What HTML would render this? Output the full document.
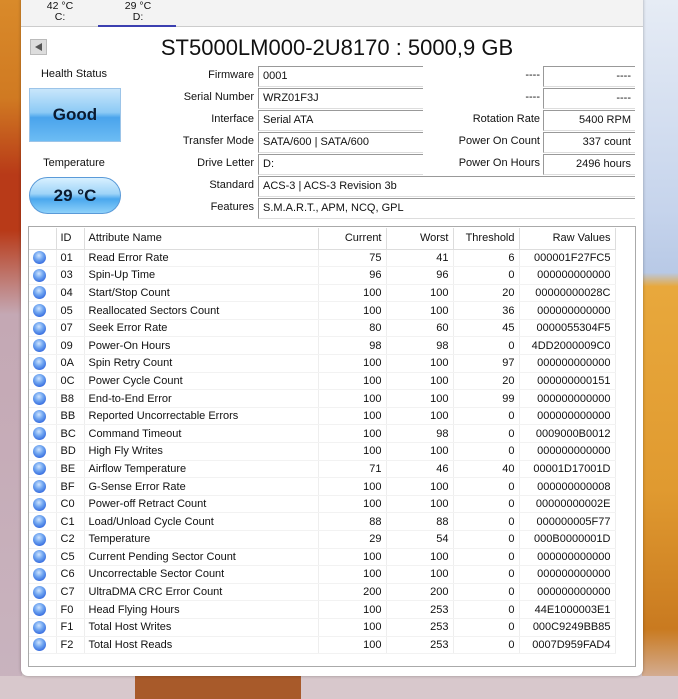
<!DOCTYPE html>
<html><head><meta charset="utf-8"><style>
*{margin:0;padding:0;box-sizing:border-box}
body{width:678px;height:699px;overflow:hidden;position:relative;font-family:"Liberation Sans","DejaVu Sans",sans-serif;font-size:11px;color:#111;
background:linear-gradient(180deg,#c9d6e8 0,#c9d6e8 40%,#d6c6c8 100%)}
.bgl{position:absolute;left:0;top:0;width:22px;height:699px;background:linear-gradient(180deg,#d98a2a 0,#d07a22 14%,#b83a18 25%,#b83a18 33%,#c4a8b4 45%,#c9b4bf 100%)}
.bgr{position:absolute;left:642px;top:0;width:36px;height:699px;background:linear-gradient(180deg,#e6ecf5 0,#c6d4ec 30%,#b8c9e6 39%,#e8a83c 41%,#e09a30 70%,#c97a20 90%,#d8c4c8 100%)}
.bgb{position:absolute;left:0;top:676px;width:678px;height:23px;background:#d8c8cc}
.strip{position:absolute;left:135px;top:676px;width:166px;height:23px;background:#a85a2a}
.win{position:absolute;left:21px;top:-2px;width:622px;height:678px;background:#fff;border-radius:0 0 7px 7px;box-shadow:0 0 3px rgba(0,0,0,.3)}
.tabs{position:absolute;left:0;top:0;width:622px;height:29px;background:#f3f3f3;border-bottom:1px solid #ccc}
.tab{position:absolute;top:3px;width:78px;text-align:center;font-size:10.5px;line-height:11px}
.ab{position:absolute}
.lbl{position:absolute;text-align:right;font-size:11px}
.box{position:absolute;height:21px;border-top:1px solid #999;border-left:1px solid #999;border-bottom:1px solid #ddd;padding:3px 4px;font-size:11px;white-space:nowrap}
.r{text-align:right}
table{border-collapse:collapse;position:absolute;left:8px;top:229px;font-size:11px}
td{height:17.6px;padding:0 4px;border-right:1px solid #eee;border-bottom:1px solid #f2f2f2;white-space:nowrap}
th{height:21px;font-weight:normal;padding:0 4px;border-right:1px solid #ddd;border-bottom:1px solid #ddd;text-align:left}
.dot{display:inline-block;width:13px;height:13px;border-radius:50%;background:radial-gradient(circle at 45% 35%,#cfe4ff 0,#6ea4f0 40%,#3a6fe0 75%,#7a72d0 100%);vertical-align:middle}
</style></head><body>
<div class="bgl"></div><div class="bgr"></div><div class="bgb"></div><div class="strip"></div>
<div class="win">
 <div class="tabs">
  <div class="tab" style="left:0">42 °C<br>C:</div>
  <div class="tab" style="left:78px">29 °C<br>D:</div>
  <div class="ab" style="left:77px;top:27px;width:78px;height:2px;background:#3b3fb0"></div>
 </div>
 <div class="ab" style="left:9px;top:41px;width:17px;height:16px;background:#ddd;border:1px solid #bbb"><div style="position:absolute;left:4px;top:3px;width:0;height:0;border-top:4px solid transparent;border-bottom:4px solid transparent;border-right:7px solid #555"></div></div>
 <div class="ab" style="left:0;width:622px;top:37px;text-align:center;font-size:22px;padding-left:10px">ST5000LM000-2U8170 : 5000,9 GB</div>
 <div class="ab" style="left:7px;top:70px;width:92px;text-align:center;font-size:11px">Health Status</div>
 <div class="ab" style="left:8px;top:90px;width:92px;height:54px;border:1px solid #9cc4e8;background:linear-gradient(180deg,#c8e6fb 0,#8ccaf5 45%,#4aa4ec 55%,#6cbcf4 100%);text-align:center;line-height:52px;font-weight:bold;font-size:17px;color:#0a1a30">Good</div>
 <div class="ab" style="left:7px;top:159px;width:92px;text-align:center;font-size:11px">Temperature</div>
 <div class="ab" style="left:8px;top:179px;width:92px;height:37px;border-radius:19px;border:1px solid #5a9ad8;background:linear-gradient(180deg,#d8f0ff 0,#9ed4f8 45%,#4aa8ee 60%,#8ed2fa 100%);text-align:center;line-height:36px;font-weight:bold;font-size:17px;color:#0a1a30">29 °C</div>

 <div class="lbl" style="left:120px;width:113px;top:71px">Firmware</div>
 <div class="lbl" style="left:120px;width:113px;top:93px">Serial Number</div>
 <div class="lbl" style="left:120px;width:113px;top:115px">Interface</div>
 <div class="lbl" style="left:120px;width:113px;top:137px">Transfer Mode</div>
 <div class="lbl" style="left:120px;width:113px;top:159px">Drive Letter</div>
 <div class="lbl" style="left:120px;width:113px;top:181px">Standard</div>
 <div class="lbl" style="left:120px;width:113px;top:203px">Features</div>
 <div class="box" style="left:237px;width:165px;top:68px">0001</div>
 <div class="box" style="left:237px;width:165px;top:90px">WRZ01F3J</div>
 <div class="box" style="left:237px;width:165px;top:112px">Serial ATA</div>
 <div class="box" style="left:237px;width:165px;top:134px">SATA/600 | SATA/600</div>
 <div class="box" style="left:237px;width:165px;top:156px">D:</div>
 <div class="box" style="left:237px;width:377px;top:178px">ACS-3 | ACS-3 Revision 3b</div>
 <div class="box" style="left:237px;width:377px;top:200px">S.M.A.R.T., APM, NCQ, GPL</div>

 <div class="lbl" style="left:400px;width:119px;top:71px">----</div>
 <div class="lbl" style="left:400px;width:119px;top:93px">----</div>
 <div class="lbl" style="left:400px;width:119px;top:115px">Rotation Rate</div>
 <div class="lbl" style="left:400px;width:119px;top:137px">Power On Count</div>
 <div class="lbl" style="left:400px;width:119px;top:159px">Power On Hours</div>
 <div class="box r" style="left:522px;width:92px;top:68px">----</div>
 <div class="box r" style="left:522px;width:92px;top:90px">----</div>
 <div class="box r" style="left:522px;width:92px;top:112px">5400 RPM</div>
 <div class="box r" style="left:522px;width:92px;top:134px">337 count</div>
 <div class="box r" style="left:522px;width:92px;top:156px">2496 hours</div>

 <div class="ab" style="left:7px;top:228px;width:608px;height:441px;border:1px solid #aaa"></div>
 <table style="top:230px">
 <tr><th style="width:27px"></th><th style="width:28px">ID</th><th style="width:234px">Attribute Name</th><th style="width:68px;text-align:right">Current</th><th style="width:67px;text-align:right">Worst</th><th style="width:66px;text-align:right">Threshold</th><th style="width:96px;text-align:right">Raw Values</th></tr>
 <tr><td><span class="dot"></span></td><td>01</td><td>Read Error Rate</td><td class="r">75</td><td class="r">41</td><td class="r">6</td><td class="r">000001F27FC5</td></tr>
 <tr><td><span class="dot"></span></td><td>03</td><td>Spin-Up Time</td><td class="r">96</td><td class="r">96</td><td class="r">0</td><td class="r">000000000000</td></tr>
 <tr><td><span class="dot"></span></td><td>04</td><td>Start/Stop Count</td><td class="r">100</td><td class="r">100</td><td class="r">20</td><td class="r">00000000028C</td></tr>
 <tr><td><span class="dot"></span></td><td>05</td><td>Reallocated Sectors Count</td><td class="r">100</td><td class="r">100</td><td class="r">36</td><td class="r">000000000000</td></tr>
 <tr><td><span class="dot"></span></td><td>07</td><td>Seek Error Rate</td><td class="r">80</td><td class="r">60</td><td class="r">45</td><td class="r">0000055304F5</td></tr>
 <tr><td><span class="dot"></span></td><td>09</td><td>Power-On Hours</td><td class="r">98</td><td class="r">98</td><td class="r">0</td><td class="r">4DD2000009C0</td></tr>
 <tr><td><span class="dot"></span></td><td>0A</td><td>Spin Retry Count</td><td class="r">100</td><td class="r">100</td><td class="r">97</td><td class="r">000000000000</td></tr>
 <tr><td><span class="dot"></span></td><td>0C</td><td>Power Cycle Count</td><td class="r">100</td><td class="r">100</td><td class="r">20</td><td class="r">000000000151</td></tr>
 <tr><td><span class="dot"></span></td><td>B8</td><td>End-to-End Error</td><td class="r">100</td><td class="r">100</td><td class="r">99</td><td class="r">000000000000</td></tr>
 <tr><td><span class="dot"></span></td><td>BB</td><td>Reported Uncorrectable Errors</td><td class="r">100</td><td class="r">100</td><td class="r">0</td><td class="r">000000000000</td></tr>
 <tr><td><span class="dot"></span></td><td>BC</td><td>Command Timeout</td><td class="r">100</td><td class="r">98</td><td class="r">0</td><td class="r">0009000B0012</td></tr>
 <tr><td><span class="dot"></span></td><td>BD</td><td>High Fly Writes</td><td class="r">100</td><td class="r">100</td><td class="r">0</td><td class="r">000000000000</td></tr>
 <tr><td><span class="dot"></span></td><td>BE</td><td>Airflow Temperature</td><td class="r">71</td><td class="r">46</td><td class="r">40</td><td class="r">00001D17001D</td></tr>
 <tr><td><span class="dot"></span></td><td>BF</td><td>G-Sense Error Rate</td><td class="r">100</td><td class="r">100</td><td class="r">0</td><td class="r">000000000008</td></tr>
 <tr><td><span class="dot"></span></td><td>C0</td><td>Power-off Retract Count</td><td class="r">100</td><td class="r">100</td><td class="r">0</td><td class="r">00000000002E</td></tr>
 <tr><td><span class="dot"></span></td><td>C1</td><td>Load/Unload Cycle Count</td><td class="r">88</td><td class="r">88</td><td class="r">0</td><td class="r">000000005F77</td></tr>
 <tr><td><span class="dot"></span></td><td>C2</td><td>Temperature</td><td class="r">29</td><td class="r">54</td><td class="r">0</td><td class="r">000B0000001D</td></tr>
 <tr><td><span class="dot"></span></td><td>C5</td><td>Current Pending Sector Count</td><td class="r">100</td><td class="r">100</td><td class="r">0</td><td class="r">000000000000</td></tr>
 <tr><td><span class="dot"></span></td><td>C6</td><td>Uncorrectable Sector Count</td><td class="r">100</td><td class="r">100</td><td class="r">0</td><td class="r">000000000000</td></tr>
 <tr><td><span class="dot"></span></td><td>C7</td><td>UltraDMA CRC Error Count</td><td class="r">200</td><td class="r">200</td><td class="r">0</td><td class="r">000000000000</td></tr>
 <tr><td><span class="dot"></span></td><td>F0</td><td>Head Flying Hours</td><td class="r">100</td><td class="r">253</td><td class="r">0</td><td class="r">44E1000003E1</td></tr>
 <tr><td><span class="dot"></span></td><td>F1</td><td>Total Host Writes</td><td class="r">100</td><td class="r">253</td><td class="r">0</td><td class="r">000C9249BB85</td></tr>
 <tr><td><span class="dot"></span></td><td>F2</td><td>Total Host Reads</td><td class="r">100</td><td class="r">253</td><td class="r">0</td><td class="r">0007D959FAD4</td></tr>
 </table>
</div>
</body></html>
